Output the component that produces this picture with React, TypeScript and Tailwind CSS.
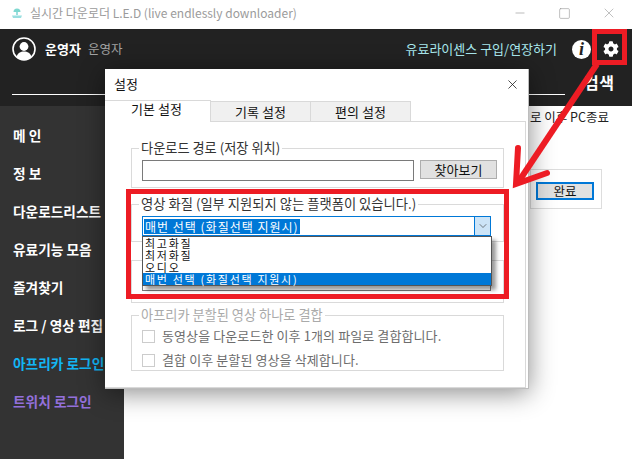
import { Minus, Square, X, ChevronDown } from "lucide-react";
import { FaCog } from "react-icons/fa";

const menu = [
  { label: "메 인", color: "text-white" },
  { label: "정 보", color: "text-white" },
  { label: "다운로드리스트", color: "text-white" },
  { label: "유료기능 모음", color: "text-white" },
  { label: "즐겨찾기", color: "text-white" },
  { label: "로그 / 영상 편집", color: "text-white" },
  { label: "아프리카 로그인", color: "text-[#12b5f5]" },
  { label: "트위치 로그인", color: "text-[#9370db]" },
];

function Check({ label }: { label: string }) {
  return (
    <div className="flex items-center h-[24px] pl-[10px] gap-[7px]">
      <span className="w-[13px] h-[13px] border border-[#cccccc] bg-white" />
      <span className="text-[13px] tracking-[0.1px] text-[#6d6d6d]">{label}</span>
    </div>
  );
}

export default function App() {
  return (
    <div className="relative w-[632px] h-[459px] overflow-hidden bg-white flex flex-col font-['Noto_Sans_CJK_KR',sans-serif]">
      {/* 타이틀바 */}
      <div className="h-[29px] flex items-center pl-[11px] pb-[3px] shrink-0">
        <svg width="12" height="12" viewBox="0 0 12 12">
          <path d="M2.500 5a3.500 3.500 0 0 1 7 0z" fill="#7fd8d0" />
          <rect x="5" y="5" width="2" height="3" fill="#9adfe0" />
          <path d="M1 8.500h10l-1 2.500H2z" fill="#9adfe0" />
        </svg>
        <span className="ml-[7px] text-[12px] text-[#9b9b9b]">실시간 다운로더 L.E.D (live endlessly downloader)</span>
        <div className="ml-auto flex items-center text-[#8a8a8a]">
          <Minus size={14} strokeWidth={1} className="mr-[31px]" />
          <Square size={13} strokeWidth={1} className="mr-[30px]" />
          <X size={16} strokeWidth={1} className="mr-[15px] text-[#a0a0a0]" />
        </div>
      </div>

      {/* 상단 헤더 */}
      <div className="h-[40px] bg-[#222222] flex items-center pl-[12px] shrink-0">
        <svg width="24" height="24" viewBox="0 0 24 24" fill="none">
          <circle cx="12" cy="12" r="11" stroke="white" strokeWidth="1.6" />
          <circle cx="12" cy="9.500" r="4.400" fill="white" />
          <path d="M4.500 20c1-4 4-5.500 7.500-5.500s6.500 1.500 7.500 5.500a11 11 0 0 1-15 0z" fill="white" />
        </svg>
        <span className="ml-[9px] text-[13px] font-bold text-white">운영자</span>
        <span className="ml-[7px] text-[12.500px] text-[#a3a3a3]">운영자</span>
        <span className="ml-auto text-[13px] text-[#a9e9ee]">유료라이센스 구입/연장하기</span>
        <div className="ml-[15px] w-[19px] h-[19px] rounded-full bg-white flex items-center justify-center">
          <span className="text-[#222222] text-[18px] font-bold italic leading-none font-['Liberation_Serif',serif]">i</span>
        </div>
        <FaCog size={16} className="ml-[12px] mr-[13px] text-white" />
      </div>

      {/* 검색 줄 */}
      <div className="h-[37px] bg-[#222222] flex items-start pl-[12px] shrink-0">
        <div className="mt-[25px] h-px w-[553px] bg-white" />
        <span className="ml-[19px] text-[16px] font-bold text-white leading-[26px] tracking-[0.500px]">검색</span>
      </div>

      <div className="flex flex-1">
        {/* 사이드바 */}
        <div className="w-[124px] bg-[#333333] pl-[13px] pt-[10px]">
          {menu.map((m) => (
            <div key={m.label} className={`h-[38px] leading-[38px] text-[13.700px] font-bold whitespace-nowrap ${m.color}`}>
              {m.label}
            </div>
          ))}
        </div>

        {/* 본문 */}
        <div className="flex-1 pl-[406px] pt-[1px]">
          <div className="text-[12.500px] text-[#222222] whitespace-nowrap leading-[20px]">로 이후 PC종료</div>
          <div className="mt-[42px] w-[72px] h-[40px] border border-[#dddddd] flex pt-[12px] pl-[5px] box-border">
            <div className="w-[58px] h-[18px] border-2 border-[#0078d7] bg-[#e1e1e1] text-[12.500px] text-[#111111] flex items-center justify-center">완료</div>
          </div>
        </div>
      </div>

      {/* 설정 창 */}
      <div className="absolute left-[105px] top-[69px] w-[424px] h-[320px] bg-white border-r border-b border-[#bdbdbd] shadow-[0_4px_24px_rgba(0,0,0,0.45)] flex flex-col text-[#222222]">
        <div className="h-[30px] flex items-center justify-between pl-[9px] pr-[8px] shrink-0">
          <span className="text-[13px] text-[#111111]">설정</span>
          <X size={15} strokeWidth={1.2} className="text-[#111111]" />
        </div>
        <div className="flex items-end h-[22px] shrink-0 text-[13px] text-[#111111]">
          <div className="w-[106px] h-[22px] bg-white border-t border-r border-[#d9d9d9] flex justify-center pr-[2px] -mb-px relative z-10">
            <span className="leading-[15px]">기본 설정</span>
          </div>
          <div className="w-[100px] h-[20px] bg-[#f0f0f0] border-t border-r border-[#d9d9d9] flex items-center justify-center">기록 설정</div>
          <div className="w-[100px] h-[20px] bg-[#f0f0f0] border-t border-r border-[#d9d9d9] flex items-center justify-center">편의 설정</div>
        </div>
        <div className="flex-1 mr-[2px] border-t border-r border-b border-[#d9d9d9] pl-[26px] pr-[21px] flex flex-col">
          {/* 다운로드 경로 */}
          <div className="mt-[26px] h-[40px] border border-[#dadada] relative pl-[10px] pt-[11px] flex">
            <span className="absolute left-[7px] -top-[10px] px-[2px] bg-white text-[13.200px] leading-[18px] text-[#333333] whitespace-nowrap">다운로드 경로 (저장 위치)</span>
            <div className="w-[272px] h-[21px] border border-[#7a7a7a]" />
            <div className="ml-[6px] w-[77px] h-[19px] bg-[#e1e1e1] border border-[#adadad] text-[13px] text-[#111111] flex items-center justify-center">찾아보기</div>
          </div>

          {/* 영상 화질 */}
          <div className="mt-[16px] h-[38px] border border-[#dadada] relative pl-[10px] pt-[11px]">
            <span className="absolute left-[7px] -top-[10px] px-[2px] bg-white text-[13.300px] leading-[18px] text-[#333333] whitespace-nowrap">영상 화질 (일부 지원되지 않는 플랫폼이 있습니다.)</span>
            <div className="w-[349px] h-[20px] border border-[#0078d7] flex items-center pl-[1px]">
              <span className="bg-[#0078d7] text-white text-[12px] tracking-[1px] leading-[15px] px-[1px] whitespace-nowrap">매번 선택 (화질선택 지원시)</span>
              <div className="ml-auto w-[16px] h-[18px] bg-[#cce4f7] border-l border-[#0078d7] flex items-center justify-center">
                <ChevronDown size={12} strokeWidth={1.2} className="text-[#333333]" />
              </div>
            </div>
          </div>

          {/* 드롭다운 뒤쪽 그룹 */}
          <div className="mt-[18px] h-[43px] border border-[#dadada] pl-[10px]">
            <div className="mt-[9px] w-[349px] h-[21px] border border-[#7a7a7a]" />
          </div>

          {/* 영상 결합 */}
          <div className="mt-[12px] h-[56px] border border-[#d9d9d9] relative">
            <span className="absolute left-[7px] -top-[10px] px-[2px] bg-white text-[13.200px] leading-[18px] text-[#aaaaaa] whitespace-nowrap">아프리카 분할된 영상 하나로 결합</span>
            <div className="pt-[8px]">
              <Check label="동영상을 다운로드한 이후 1개의 파일로 결합합니다." />
              <Check label="결합 이후 분할된 영상을 삭제합니다." />
            </div>
          </div>
        </div>
      </div>

      {/* 드롭다운 목록 */}
      <div className="absolute left-[142px] top-[236px] w-[350px] h-[50px] bg-white border border-[#555555] shadow-[4px_4px_4px_rgba(0,0,0,0.4)] text-[11px] tracking-[1.700px] text-[#111111] leading-[12px] whitespace-nowrap">
        <div className="h-[12px] pl-[2px]">최고화질</div>
        <div className="h-[12px] pl-[2px]">최저화질</div>
        <div className="h-[12px] pl-[2px]">오디오</div>
        <div className="h-[12px] pl-[2px] bg-[#0078d7] text-white">매번 선택 (화질선택 지원시)</div>
      </div>

      {/* 빨간 표시 */}
      <div className="absolute left-[126px] top-[189px] w-[383px] h-[110px] border-[5px] border-[#ed1c24]" />
      <div className="absolute left-[592px] top-[29px] w-[35px] h-[36px] border-[5px] border-[#ed1c24]" />
      <svg className="absolute left-0 top-0" width="632" height="459" viewBox="0 0 632 459" fill="none">
        <path d="M597 64 L519 181" stroke="#ed1c24" strokeWidth="6" />
        <path d="M518 148 L516 184 L547 173" stroke="#ed1c24" strokeWidth="6" strokeLinecap="round" />
      </svg>
    </div>
  );
}
